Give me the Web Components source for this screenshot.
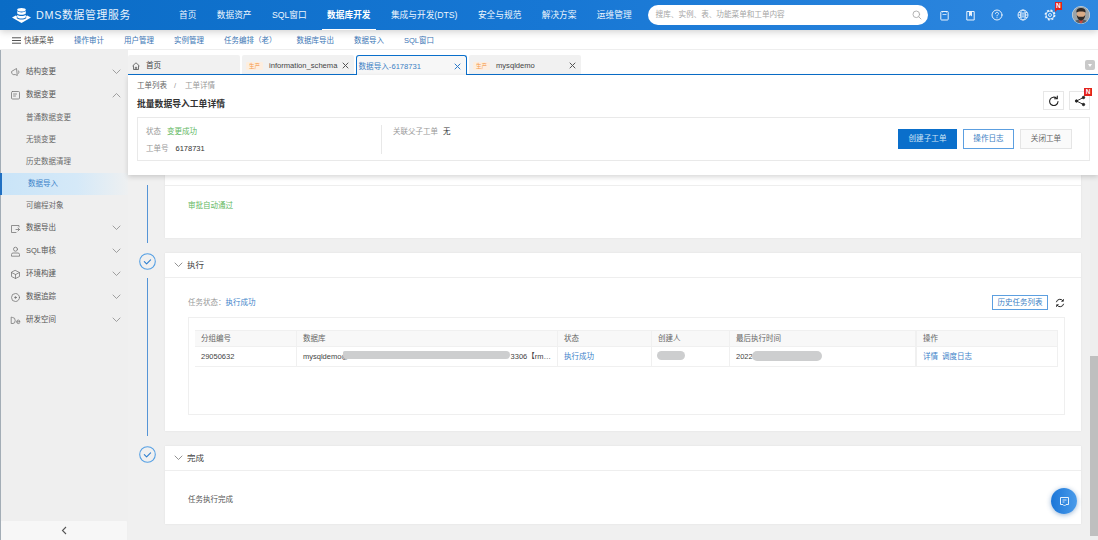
<!DOCTYPE html>
<html lang="zh">
<head>
<meta charset="utf-8">
<title>DMS</title>
<style>
html,body{margin:0;padding:0;width:1098px;height:540px;overflow:hidden;background:#efefef}
body{display:flex;flex-direction:column;font:7.5px/12px "Liberation Sans","Noto Sans CJK SC",sans-serif;color:#555}
</style>
</head>
<body>
<top-bar></top-bar>
<quick-bar></quick-bar>
<work-area>
  <side-menu slot="side">
    <side-item icon="struct" chev="down">结构变更</side-item>
    <side-item icon="change" chev="up">数据变更</side-item>
    <side-item sub>普通数据变更</side-item>
    <side-item sub>无锁变更</side-item>
    <side-item sub>历史数据清理</side-item>
    <side-item sub active>数据导入</side-item>
    <side-item sub>可编程对象</side-item>
    <side-item icon="export" chev="down">数据导出</side-item>
    <side-item icon="audit" chev="down">SQL审核</side-item>
    <side-item icon="env" chev="down">环境构建</side-item>
    <side-item icon="trace" chev="down">数据追踪</side-item>
    <side-item icon="dev" chev="down">研发空间</side-item>
  </side-menu>
  <tab-strip></tab-strip>
  <ticket-panel></ticket-panel>
  <step-list>
    <step-row line="both">
      <step-card h="52" gap="14">
        <span style="color:#62b862">审批自动通过</span>
      </step-card>
    </step-row>
    <step-row done line="after">
      <step-card heading="执行" h="153" gap="17"><exec-body></exec-body></step-card>
    </step-row>
    <step-row done>
      <step-card heading="完成" h="53" gap="23">
        <span style="color:#555">任务执行完成</span>
      </step-card>
    </step-row>
  </step-list>
</work-area>
<chat-fab></chat-fab>

<script>
const S='fill="none" stroke="currentColor" stroke-linecap="round" stroke-linejoin="round"';
const ICON={
 struct:`<svg width="11" height="11" viewBox="0 0 11 11" ${S} stroke-width=".8"><path d="M2 4.2 6.500 1.500l.8 7-1.900-.9H3.200L2 6.600zM8.600 3.800a2 2 0 0 1 0 2.600"/></svg>`,
 change:`<svg width="11" height="11" viewBox="0 0 11 11" ${S} stroke-width=".8"><rect x="1.500" y="1.500" width="8" height="7.500" rx="1"/><path d="M3.500 4h3M3.500 6h2"/></svg>`,
 export:`<svg width="11" height="11" viewBox="0 0 11 11" ${S} stroke-width=".8"><path d="M9 4V2.500H1.500v7H6M6 6.500h3.500M8 5l1.500 1.500L8 8"/></svg>`,
 audit:`<svg width="11" height="11" viewBox="0 0 11 11" ${S} stroke-width=".8"><circle cx="5.500" cy="3.200" r="2"/><path d="M1.500 9.800V8.500Q1.500 7 3 7h5q1.500 0 1.500 1.500v1.300z"/></svg>`,
 env:`<svg width="11" height="11" viewBox="0 0 11 11" ${S} stroke-width=".8"><path d="M5.500 1.500 9.500 3.500v4l-4 2-4-2v-4zM1.500 3.500l4 2 4-2M5.500 5.500v4"/></svg>`,
 trace:`<svg width="11" height="11" viewBox="0 0 11 11" ${S} stroke-width=".8"><circle cx="5.500" cy="5.500" r="4"/><circle cx="5.500" cy="5.500" r=".8" fill="currentColor"/></svg>`,
 dev:`<svg width="11" height="11" viewBox="0 0 11 11" ${S} stroke-width=".8"><path d="M1.200 2.500v6H3q2.200 0 2.200-3T3 2.500z"/><path d="M6.800 6.800h3M9.800 6.800Q9.800 5 8.300 5T6.800 6.800 8.300 8.600q1 0 1.400-.6"/></svg>`,
 down:`<svg width="9" height="6" viewBox="0 0 9 6" ${S} stroke-width=".8"><path d="M1 1l3.500 3.500L8 1"/></svg>`,
 up:`<svg width="9" height="6" viewBox="0 0 9 6" ${S} stroke-width=".8"><path d="M1 5 4.500 1.500 8 5"/></svg>`,
 close:`<svg width="7" height="7" viewBox="0 0 7 7" ${S} stroke-width="1"><path d="M1 1l5 5M6 1 1 6"/></svg>`
};
function def(name,html,setup){
  customElements.define(name,class extends HTMLElement{
    constructor(){super();this.attachShadow({mode:'open'});}
    connectedCallback(){
      const a=n=>this.getAttribute(n);
      this.shadowRoot.innerHTML=typeof html==='function'?html(a,this):html;
      if(setup)setup(this,a);
    }
  });
}

def('top-bar',`<style>
:host{display:flex;align-items:center;height:30px;flex:none;position:relative;z-index:3;color:#fff;
 background:linear-gradient(90deg,#0a6cc6 0%,#1777d4 50%,#2f88e0 100%);box-shadow:0 2px 7px rgba(0,0,0,.18)}
.logo{display:flex;align-items:center;width:179px;flex:none;padding-left:11px;box-sizing:border-box}
.logo b{font-weight:400;font-size:10.800px;letter-spacing:.7px;margin-left:4px;white-space:nowrap;color:#e9f3fc}
nav{display:flex;gap:20.400px;font-size:8.700px;height:30px;align-items:center;flex:none}
nav a{position:relative;line-height:30px;white-space:nowrap;color:#eef6fd}
nav a.on{font-weight:700;color:#fff}
nav a.on::after{content:"";position:absolute;left:-5px;right:-5px;bottom:0;height:1.500px;background:#fff}
.search{width:280px;height:20px;flex:none;margin-left:16px;background:#fff;border-radius:10px;display:flex;align-items:center;
 padding:0 6px 0 8px;box-sizing:border-box;color:#a5a5a5;font-size:7.600px}
.search span{flex:1}
.icons{display:flex;margin-left:4px;width:131px;flex:none;align-items:center}
.ic{width:26.250px;display:flex;justify-content:center;position:relative;flex:none;color:#e8f2fc}
.n{position:absolute;left:18px;top:-7px;width:7.500px;height:7.500px;background:#e3231b;color:#fff;font:700 6.500px/7.500px "Liberation Sans",sans-serif;text-align:center}
.n::after{content:"";position:absolute;left:0;top:7.500px;border-left:2.500px solid #e3231b;border-bottom:2px solid transparent}
.av{margin-left:9px;flex:none;display:flex}
</style>
<div class="logo">
 <svg width="21" height="17" viewBox="0 0 21 17" fill="#fff"><path d="M1 10.500 4.800 8.400l1 .5v2.300c1 .9 2.800 1.400 4.700 1.400s3.700-.5 4.700-1.400V8.900l1-.5 3.800 2.100-9.500 5.500z"/><ellipse cx="10.500" cy="2.800" rx="4.300" ry="1.800"/><path d="M6.200 4.100c.8.900 2.500 1.300 4.300 1.300s3.500-.4 4.300-1.300V6.500c-.8.900-2.500 1.300-4.300 1.300S7 7.400 6.200 6.500zM6.200 7.800c.8.900 2.500 1.300 4.300 1.300s3.500-.4 4.300-1.300v2.500c-.8.900-2.500 1.300-4.300 1.300s-3.500-.4-4.300-1.300z"/></svg>
 <b>DMS数据管理服务</b>
</div>
<nav><a>首页</a><a>数据资产</a><a>SQL窗口</a><a class="on">数据库开发</a><a>集成与开发(DTS)</a><a>安全与规范</a><a>解决方案</a><a>运维管理</a></nav>
<div class="search"><span>搜库、实例、表、功能菜单和工单内容</span>
 <svg width="10" height="10" viewBox="0 0 10 10" fill="none" stroke="#aaa" stroke-width=".9" stroke-linecap="round"><circle cx="4.300" cy="4.300" r="3.300"/><path d="M6.800 6.800 9 9"/></svg></div>
<div class="icons">
 <span class="ic"><svg width="11" height="11" viewBox="0 0 11 11" fill="none" stroke="currentColor"><rect x="1.800" y="1.500" width="7.400" height="8.500" rx=".8"/><path d="M3.500 1v1.500M7.500 1v1.500M3.500 4.500h4" stroke-width=".8"/></svg></span>
 <span class="ic"><svg width="11" height="11" viewBox="0 0 11 11" fill="none" stroke="currentColor"><path d="M1.800 1.500h7.400v8.500H1.800z"/><path d="M4 2h3v4.500L5.500 5.300 4 6.500z" fill="currentColor" stroke="none"/></svg></span>
 <span class="ic"><svg width="12" height="12" viewBox="0 0 12 12" fill="none" stroke="currentColor" stroke-linecap="round"><circle cx="6" cy="6" r="5"/><path d="M4.500 4.700C4.500 3.800 5.200 3.300 6 3.300s1.500.5 1.500 1.300c0 1.100-1.500 1.100-1.500 2.300M6 8.700v.1"/></svg></span>
 <span class="ic"><svg width="12" height="12" viewBox="0 0 12 12" fill="none" stroke="currentColor" stroke-width=".9"><circle cx="6" cy="6" r="5"/><path d="M1 6h10M2 3.300c2.200 1.200 5.800 1.200 8 0M2 8.700c2.200-1.200 5.800-1.200 8 0"/><ellipse cx="6" cy="6" rx="2.400" ry="5"/></svg></span>
 <span class="ic"><svg width="12" height="12" viewBox="0 0 12 12" fill="none" stroke="currentColor"><circle cx="6" cy="6" r="4" stroke-width=".9"/><circle cx="6" cy="6" r="4.800" stroke-width="1.300" stroke-dasharray="2 1.770"/><circle cx="6" cy="6" r="1.500" stroke-width=".9"/></svg><i class="n" style="font-style:normal">N</i></span>
</div>
<span class="av"><svg width="18" height="18" viewBox="0 0 18 18"><defs><clipPath id="c"><circle cx="9" cy="9" r="8.500"/></clipPath></defs><circle cx="9" cy="9" r="9" fill="#dfe6ec"/><g clip-path="url(#c)"><rect width="18" height="18" fill="#9aa3a8"/><path d="M2 18c0-3.500 3-4.500 7-4.500s7 1 7 4.500z" fill="#5a5f63"/><path d="M7 14h4l-1 3H8z" fill="#c9473f"/><ellipse cx="9" cy="8.500" rx="4.300" ry="5.200" fill="#d8ab86"/><path d="M4.400 6.500C4.200 3 6.500 2 9 2s4.800 1 4.600 4.500C12.500 5 5.500 5 4.400 6.500z" fill="#2e2a28"/><path d="M4.700 8.500c.2 3.800 2 6 4.300 6s4.100-2.200 4.300-6c-.6 1.400-1.300 2.200-2.200 2.200H6.900C6 10.700 5.300 9.900 4.700 8.500z" fill="#2e2a28"/></g></svg></span>
`);

def('quick-bar',`<style>
:host{display:flex;align-items:center;height:20px;flex:none;background:#fff;box-sizing:border-box;border-bottom:1px solid #eee;padding:2px 0 0 12px;position:relative;z-index:2;font-size:7.500px;color:#3c76b5;white-space:nowrap}
.m{display:flex;align-items:center;color:#555;margin-right:20px}
svg{margin-right:3px}
a{margin-right:20px}
</style>
<span class="m"><svg width="9" height="7" viewBox="0 0 9 7" stroke="#555" stroke-width="1"><path d="M0 .8h9M0 3.500h9M0 6.200h9"/></svg>快捷菜单</span>
<a>操作审计</a><a>用户管理</a><a>实例管理</a><a>任务编排（老）</a><a>数据库导出</a><a>数据导入</a><a>SQL窗口</a>`);

def('work-area',`<style>
:host{display:flex;flex:1;min-height:0}
.c{flex:1;min-width:0;display:flex;flex-direction:column;min-height:0}
</style><slot name="side"></slot><div class="c"><slot></slot></div>`);

def('side-menu',`<style>
:host{display:flex;flex-direction:column;width:128px;flex:none;box-sizing:border-box;padding-top:10.500px;background:#efefef;box-shadow:inset 1px 0 0 #a3adb6}
.col{margin-top:auto;height:19px;background:#f7f7f7;display:flex;align-items:center;justify-content:center;border-top-right-radius:1px;margin-right:1px;margin-left:1px;color:#555}
</style><slot></slot>
<div class="col"><svg width="6" height="9" viewBox="0 0 6 9" fill="none" stroke="currentColor" stroke-width="1.100"><path d="M5 1 1.500 4.500 5 8"/></svg></div>`);

def('side-item',(a,el)=>`<style>
:host{display:flex;align-items:center;height:23px;flex:none;position:relative;color:#555;font-size:7.500px}
:host([sub]){height:22px;color:#6a6a6a}
.i{width:26px;flex:none;display:flex;justify-content:center;padding-left:5px;box-sizing:border-box;color:#777}
.t{flex:1;white-space:nowrap}
.c{width:9px;margin-right:7px;display:flex;color:#8a8a8a}
:host([active]){background:linear-gradient(90deg,#c9e4f8,#d5e9f8 60%,#eef0f1);color:#3c82c9;box-shadow:inset 2px 0 0 #1f6fc2}
:host([active]) .t{padding-left:2px}
</style><span class="i">${ICON[a('icon')]||''}</span><span class="t"><slot></slot></span><span class="c">${ICON[a('chev')]||''}</span>`);

def('tab-strip',`<style>
:host{display:flex;height:25px;flex:none;box-sizing:border-box;padding-top:5px;background:#fff;border-bottom:1.500px solid #0a6fcb;position:relative;font-size:7.600px;color:#444}
.t{width:112px;height:19px;flex:none;background:#f1f1f1;border-radius:2px 2px 0 0;display:flex;align-items:center;box-sizing:border-box;padding:2px 5px 0 4px;margin-right:2px;white-space:nowrap}
.t:first-child{margin-right:1px}
.tag{width:17px;height:8px;background:#fdeee0;color:#f59a4a;font-size:5.500px;line-height:8px;text-align:center;margin-right:6px;flex:none;border-radius:1px}
.x{margin-left:auto;display:flex;color:#555}
.a{background:#f7f7f7;border:1.500px solid #0a6fcb;border-bottom:0;height:20.500px;color:#3c7fc4;padding-left:1.500px;width:111px;position:relative;border-radius:3px 3px 0 0;margin-right:2px}
.a .x{color:#2c7bcb}
.home{margin-right:6px;display:flex}
.dd{position:absolute;left:957px;top:10px;width:10px;height:10px;background:#c9c9c9;border-radius:2px;display:flex;align-items:center;justify-content:center}
.dd::after{content:"";border:2.500px solid transparent;border-top:3px solid #fff;border-bottom:0}
</style>
<div class="t"><span class="home"><svg width="8" height="8" viewBox="0 0 8 8" fill="none" stroke="#555" stroke-width=".8"><path d="M.5 4 4 .8 7.500 4M1.500 3.500v4h5v-4M3.300 7.500V5.300h1.400v2.200"/></svg></span>首页</div>
<div class="t"><span class="tag">生产</span>information_schema<span class="x">${ICON.close}</span></div>
<div class="t a">数据导入-6178731<span class="x">${ICON.close}</span></div>
<div class="t"><span class="tag">生产</span>mysqldemo<span class="x">${ICON.close}</span></div>
<span class="dd"></span>`);

def('ticket-panel',`<style>
:host{display:block;height:100px;flex:none;box-sizing:border-box;padding:0 8px 0 9px;background:#fff;position:relative;z-index:1;box-shadow:0 2px 5px rgba(0,0,0,.16);color:#555}
.h{display:flex;height:42px}
.l{flex:1}
.bc{margin-top:5px;line-height:12px;color:#666;display:flex}
.bc i{font-style:normal;color:#999;margin:0 9px 0 7px}
.ti{margin-top:6px;font-weight:700;font-size:8.800px;line-height:12px;color:#333}
.rb{display:flex;gap:5px;margin-top:16px}
.sq{width:21px;height:19px;box-sizing:border-box;border:1px solid #e7e7e7;background:#fff;display:flex;align-items:center;justify-content:center;position:relative;color:#222}
.n{position:absolute;right:-3px;top:-4px;width:8px;height:8px;background:#e3231b;color:#fff;font:700 6.500px/8px "Liberation Sans",sans-serif;text-align:center}
.box{height:44px;box-sizing:border-box;border:1px solid #e9e9e9;display:flex;align-items:center;padding:0 17px 0 8px}
.a{width:235px;flex:none;line-height:17px;margin-top:2px}
.a p,.b p{margin:0}
.lb{color:#999}.g{color:#62b862;margin-left:6px}.v{color:#333;margin-left:7px}
.d{width:1px;height:29px;background:#e8e8e8;flex:none}
.b{padding-left:11px;height:34px;line-height:17px;flex:none;margin-top:2px}
.btns{margin-left:auto;display:flex;gap:6px;margin-top:-1px}
.btn{height:20px;box-sizing:border-box;display:flex;align-items:center;justify-content:center;font-size:7.600px}
.p{width:59px;background:#0a6fcb;color:#cfe4f6;border:1px solid #0a6fcb}
.o{width:51px;border:1px solid #5c9fe0;color:#3c7fc4;background:#fff}
.c{width:52px;border:1px solid #e5e5e5;color:#666;background:#fafafa}
</style>
<div class="h"><div class="l"><div class="bc">工单列表<i>/</i><span style="color:#999">工单详情</span></div><div class="ti">批量数据导入工单详情</div></div>
<div class="rb"><span class="sq"><svg width="12" height="12" viewBox="0 0 12 12" fill="none" stroke="currentColor" stroke-width="1.100" stroke-linecap="round"><path d="M10 6.500a4.200 4.200 0 1 1-1.300-3.200"/><path d="M9.300 1v2.800H6.600" stroke-linejoin="round"/></svg></span>
<span class="sq"><svg width="12" height="12" viewBox="0 0 12 12" fill="#222" stroke="#222" stroke-width=".9"><path d="M9.500 2.500 2.500 6l7 3.500" fill="none"/><circle cx="9.500" cy="2.500" r="1.200"/><circle cx="2.500" cy="6" r="1.200"/><circle cx="9.500" cy="9.500" r="1.200"/></svg><i class="n" style="font-style:normal">N</i></span></div></div>
<div class="box">
 <div class="a"><p><span class="lb">状态</span><span class="g">变更成功</span></p><p><span class="lb">工单号</span><span class="v">6178731</span></p></div>
 <div class="d"></div>
 <div class="b"><p><span class="lb">关联父子工单</span><span class="v" style="margin-left:5px">无</span></p></div>
 <div class="btns"><span class="btn p">创建子工单</span><span class="btn o">操作日志</span><span class="btn c">关闭工单</span></div>
</div>`);

def('step-list',`<style>
:host{display:flex;flex:1;min-height:0;overflow:hidden;position:relative;background:#f0f0f0}
.m{flex:1;min-width:0}
.sb{width:8px;flex:none;background:#eeeeee;display:flex;flex-direction:column}
.th{margin-top:181px;height:180px;background:#bfbfbf;flex:none}
</style><div class="m"><slot></slot></div><div class="sb"><div class="th"></div></div>`);

def('step-row',(a,el)=>{
 const line=a('line'),done=el.hasAttribute('done');
 return `<style>
:host{display:flex;padding-right:9px}
.r{width:37px;flex:none;display:flex;flex-direction:column;align-items:center;box-sizing:border-box;padding-left:2px;padding-bottom:10px}
.ln{width:1px;flex:1;background:#5594d6}
.top{margin-top:10px}
.ci{width:17px;height:17px;flex:none;margin-bottom:8px;display:flex}
.cc{flex:1;min-width:0}
</style>
<div class="r" ${line?'':'style="padding-bottom:0"'}>
 ${done?`<span class="ci"><svg width="17" height="17" viewBox="0 0 17 17" fill="none"><circle cx="8.500" cy="8.500" r="7.800" stroke="#56a0e4" stroke-width="1.100"/><path d="M5.300 8.700l2.300 2.200 4-4" stroke="#2d7fd0" stroke-width="1.100" stroke-linecap="round" stroke-linejoin="round"/></svg></span>`:''}
 ${line==='both'?'<span class="ln top"></span>':line==='after'?'<span class="ln"></span>':''}
</div><div class="cc"><slot></slot></div>`;
});

def('step-card',(a,el)=>{
 const h=a('heading');
 return `<style>
:host{display:block;background:#fff;margin-bottom:15px;box-shadow:0 0 2px rgba(0,0,0,.07)}
.hd{display:flex;align-items:center;box-sizing:border-box;border-bottom:1.500px solid #eee;${h?'height:25px;':'height:11px;'}padding-left:9px;font-size:8.500px;color:#444}
.hd svg{margin-right:4px;color:#777}
.bd{box-sizing:border-box;height:${a('h')}px;padding:${a('gap')}px 16px 0 23px}
</style>
<div class="hd">${h?ICON.down+h:''}</div><div class="bd"><slot></slot></div>`;
});

def('exec-body',`<style>
:host{display:block}
.t{display:flex;align-items:center;height:15px}
.lb{color:#999}.st{color:#3c82c9}
.btn{margin-left:auto;width:56px;height:15px;box-sizing:border-box;border:1px solid #5c9fe0;color:#3c7fc4;display:flex;align-items:center;justify-content:center;font-size:7.500px}
.rf{margin-left:7px;width:10px;display:flex}
.box{margin-top:7px;height:98px;box-sizing:border-box;border:1px solid #efefef;padding:12px 6px 0}
</style>
<div class="t"><span class="lb">任务状态：</span><span class="st">执行成功</span><span class="btn">历史任务列表</span>
<span class="rf"><svg width="10" height="10" viewBox="0 0 10 10" fill="none" stroke="#222" stroke-width="1"><path d="M1.400 4.200A3.600 3.600 0 0 1 8 3M8.600 5.800A3.600 3.600 0 0 1 2 7"/><path d="M8.400 1v2.300H6.200M1.600 9V6.700h2.200" stroke-width=".8"/></svg></span></div>
<div class="box"><data-table></data-table></div>`);

def('data-table',`<style>
:host{display:grid;grid-template-columns:102px 261px 94px 78px 186px 142px;color:#555;white-space:nowrap}
.c{box-sizing:border-box;padding:0 6px;display:flex;align-items:center;position:relative;border-right:1px solid #f0f0f0;border-bottom:1px solid #f0f0f0;overflow:hidden}
.c:nth-child(6n+1){border-left:1px solid #f0f0f0}
.h{height:17px;background:#f8f8f8;color:#666;border-top:1px solid #f0f0f0}
.r{height:20px;color:#444}
.l{color:#3c82c9}
.sp{justify-content:space-between}
.bl{position:absolute;background:#cdcecf;border-radius:5px}
a{margin-right:4px}
</style>
<div class="c h">分组编号</div><div class="c h">数据库</div><div class="c h">状态</div><div class="c h">创建人</div><div class="c h">最后执行时间</div><div class="c h">操作</div>
<div class="c r">29050632</div>
<div class="c r sp"><span>mysqldemo@</span><span>3306【rm…</span><i class="bl" style="left:46px;top:4px;width:167px;height:8px;border-radius:2px 5px 5px 5px"></i></div>
<div class="c r l">执行成功</div>
<div class="c r"><i class="bl" style="left:5px;top:4px;width:28px;height:9px"></i></div>
<div class="c r">2022-<i class="bl" style="left:22px;top:4px;width:70px;height:10px"></i></div>
<div class="c r l"><a>详情</a><a>调度日志</a></div>`);

def('chat-fab',`<style>
:host{position:fixed;left:1051px;top:488px;width:26px;height:26px;border-radius:50%;background:linear-gradient(90deg,#1b76d8,#4a9bea);box-shadow:0 1px 5px rgba(30,90,160,.45);display:flex;align-items:center;justify-content:center;z-index:5}
</style><svg width="11" height="11" viewBox="0 0 11 11" fill="none" stroke="#e6f1fb"><path d="M1.500 1.500h8v7H7L5.500 10 4 8.500H1.500z"/><path d="M3.500 4h4M3.500 6h2" stroke-width=".9"/></svg>`);
</script>
</body>
</html>
